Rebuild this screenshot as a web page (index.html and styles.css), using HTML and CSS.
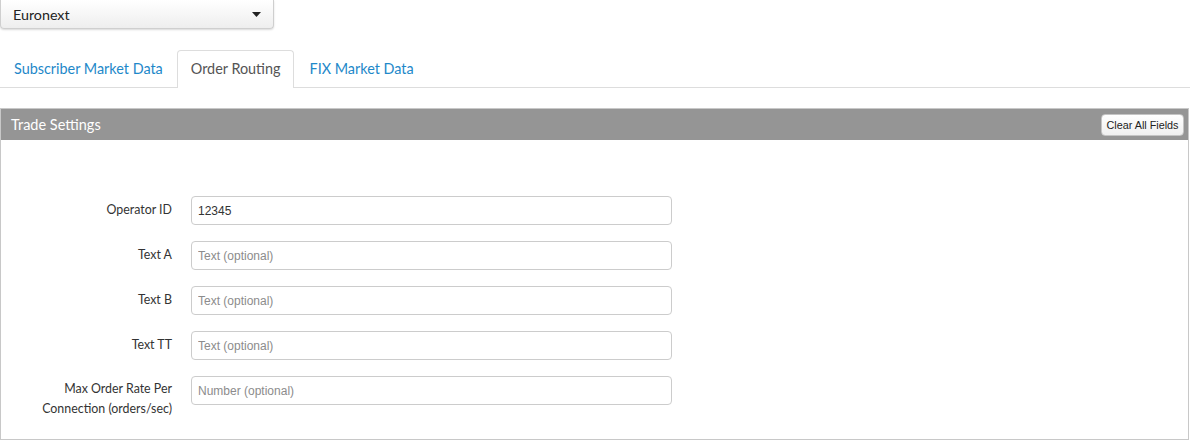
FILE: index.html
```html
<!DOCTYPE html>
<html>
<head>
<meta charset="utf-8">
<link rel="stylesheet" href="styles.css">
</head>
<body>
<div class="select">
  <span class="select-label">Euronext</span>
  <svg class="caret" width="9" height="5" viewBox="0 0 9 5"><path d="M0 0 L9 0 L4.5 5 Z" fill="#222"/></svg>
</div>
<ul class="tabs">
  <li class="tab">Subscriber Market Data</li>
  <li class="tab active">Order Routing</li>
  <li class="tab">FIX Market Data</li>
</ul>
<div class="panel">
  <div class="panel-head">
    <span class="panel-title">Trade Settings</span>
    <button class="clear-btn">Clear All Fields</button>
  </div>
  <div class="panel-body">
    <div class="row"><label class="lbl">Operator ID</label><input class="field" value="12345"></div>
    <div class="row"><label class="lbl">Text A</label><input class="field" placeholder="Text (optional)"></div>
    <div class="row"><label class="lbl">Text B</label><input class="field" placeholder="Text (optional)"></div>
    <div class="row"><label class="lbl">Text TT</label><input class="field" placeholder="Text (optional)"></div>
    <div class="row"><label class="lbl two">Max Order Rate Per Connection (orders/sec)</label><input class="field" placeholder="Number (optional)"></div>
  </div>
</div>
</body>
</html>
```
FILE: styles.css
```css
* { box-sizing: border-box; }
body {
  margin: 0;
  width: 1190px;
  height: 441px;
  overflow: hidden;
  background: #fff;
  font-family: Lato, "Open Sans", sans-serif;
  color: #333;
}
.select {
  width: 274px;
  height: 29px;
  border: 1px solid #cfcfcf;
  border-top: none;
  border-radius: 0 0 4px 4px;
  background: linear-gradient(#ffffff, #eeeeee);
  box-shadow: 0 1px 2px rgba(0,0,0,0.15);
  display: flex;
  align-items: center;
  justify-content: space-between;
  padding: 0 12px 0 12px;
}
.select-label { font-size: 14.3px; color: #222; }
.caret { margin-top: 1px; }
.tabs {
  list-style: none;
  margin: 21px 0 0 0;
  padding: 0;
  display: flex;
  border-bottom: 1px solid #dddddd;
  height: 38px;
}
.tab {
  padding: 0 12px 0 13px;
  height: 38px;
  line-height: 35px;
  font-size: 14.4px;
  color: #1e88c9;
  border: 1px solid transparent;
  border-bottom: none;
}
.tab.active {
  color: #555;
  border-color: #dddddd;
  border-radius: 4px 4px 0 0;
  background: #fff;
  height: 38px;
  margin-left: 1px;
  margin-right: 2px;
}
.panel {
  margin-top: 20px;
  width: 1189px;
  border: 1px solid #c8c8c8;
  height: 332px;
}
.panel-head {
  height: 31px;
  background: #959595;
  display: flex;
  align-items: center;
  justify-content: space-between;
  padding: 0 4px 0 10px;
}
.panel-title { color: #fff; font-size: 14.5px; margin-top: -1px; }
.clear-btn {
  height: 22px;
  width: 83px;
  padding: 0;
  font-family: "Liberation Sans", Arial, sans-serif;
  font-size: 10.8px;
  color: #222;
  border: 1px solid #c4c4c4;
  border-radius: 4px;
  background: linear-gradient(#ffffff, #efefef);
  margin-top: 0;
}
.panel-body {
  padding-top: 56px;
  display: flex;
  flex-direction: column;
  gap: 16px;
}
.row {
  display: flex;
  align-items: flex-start;
}
.lbl {
  width: 171px;
  text-align: right;
  font-size: 12.4px;
  color: #333;
  line-height: 28px;
  margin-right: 19px;
}
.lbl.two {
  line-height: 20px;
  padding-top: 3px;
  padding-left: 30px;
}
.field {
  width: 481px;
  height: 29px;
  border: 1px solid #cccccc;
  border-radius: 4px;
  padding: 0 6px;
  font-family: "Liberation Sans", Arial, sans-serif;
  font-size: 12px;
  color: #333;
  outline: none;
}
.field::placeholder { color: #8c8c8c; }
```
